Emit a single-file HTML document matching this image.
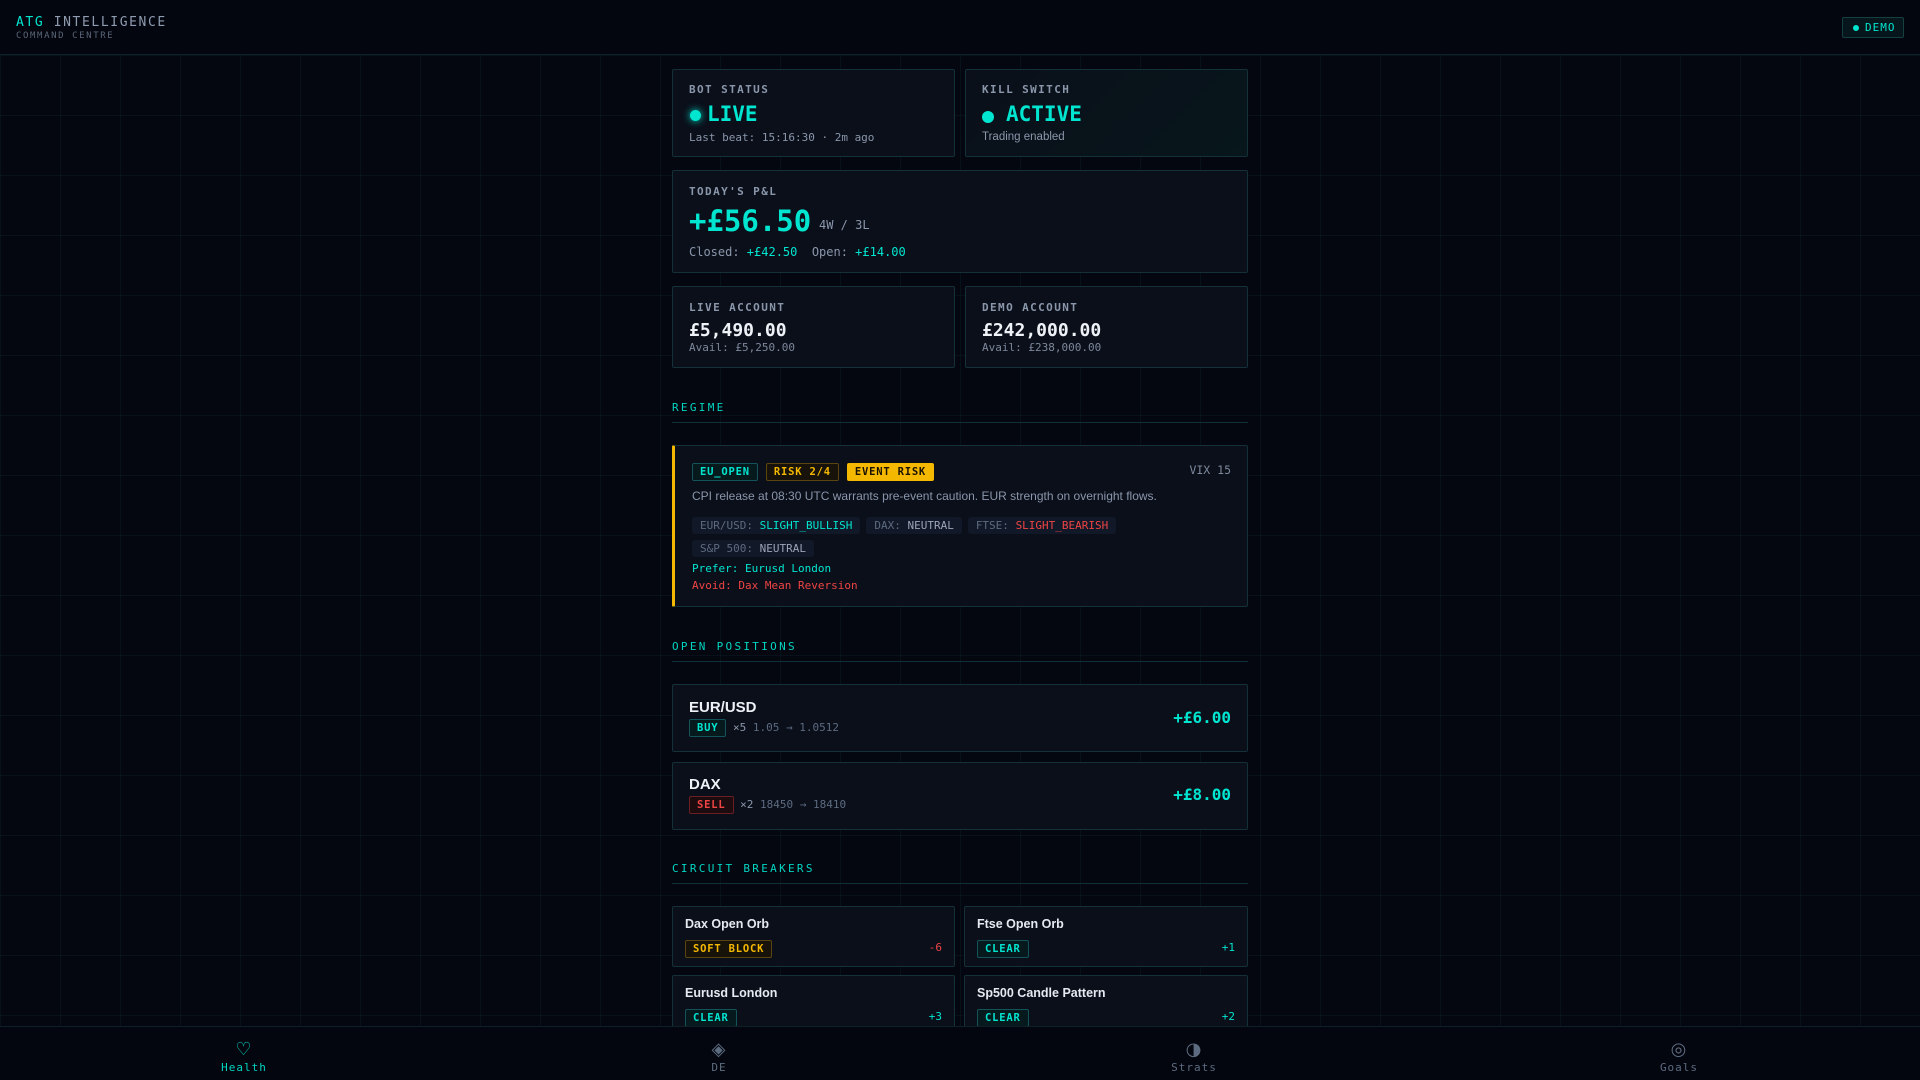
<!DOCTYPE html>
<html><head><meta charset="utf-8"><style>
*{box-sizing:border-box;margin:0;padding:0}
body{width:1920px;height:1080px;overflow:hidden;background:#04070f;font-family:"DejaVu Sans Mono","Liberation Mono",monospace;color:#c8d0dc;position:relative;
background-image:linear-gradient(rgba(20,60,70,.18) 1px,transparent 1px),linear-gradient(90deg,rgba(20,60,70,.18) 1px,transparent 1px);background-size:60px 60px;background-position:0 55px}
.a{position:absolute}
.hdr{left:0;top:0;width:1920px;height:55px;background:#03060e;border-bottom:1px solid #0f2128}
.card{position:absolute;background:#0a0f1a;border:1px solid #143038;border-radius:2px}
.lbl{font-size:11px;font-weight:bold;letter-spacing:1.4px;color:#8a96aa}
.acc{color:#00e5d0}
.sec{position:absolute;left:672px;width:576px;font-size:11px;letter-spacing:2.3px;color:#00d5c2;border-bottom:1px solid #12303a;padding-bottom:8px}
.sans{font-family:"Liberation Sans",Arial,sans-serif}
.tag{display:inline-block;font-size:10.5px;font-weight:bold;letter-spacing:0.8px;padding:2px 7px;border:1px solid;border-radius:2px}
.chip{display:inline-block;background:#111827;border-radius:3px;padding:2px 8px;font-size:11px;color:#5d6b80;margin-right:6px}
.nav{left:0;top:1026px;width:1920px;height:54px;background:#03060e;border-top:1px solid #0f2128}
.ni{position:absolute;top:13px;width:480px;text-align:center;color:#5d6b80;font-size:11px;letter-spacing:1px}
.ni .ic{font-size:18px;line-height:20px;display:block;margin-bottom:1px;font-family:"DejaVu Sans",sans-serif}
</style></head><body>
<div class="a hdr">
 <div class="a" style="left:16px;top:15px;font-size:13px;letter-spacing:1.6px;color:#8f9bb0"><span class="acc">ATG</span> INTELLIGENCE</div>
 <div class="a" style="left:16px;top:31px;font-size:9px;letter-spacing:1.6px;color:#5a6678">COMMAND CENTRE</div>
 <div class="a" style="left:1842px;top:17px;width:62px;height:21px;border:1px solid #14403f;background:#06161a;border-radius:2px;font-size:11px;color:#00e5d0;letter-spacing:1px;line-height:19px;padding-left:22px">DEMO<span class="a" style="left:10px;top:7px;width:6px;height:6px;border-radius:50%;background:#00e5d0"></span></div>
</div>

<div class="card" style="left:672px;top:69px;width:283px;height:88px">
 <div class="a lbl" style="left:16px;top:13px">BOT STATUS</div>
 <div class="a" style="left:17px;top:40px;width:11px;height:11px;border-radius:50%;background:#00e5d0;box-shadow:0 0 8px #00e5d0"></div>
 <div class="a acc" style="left:34px;top:32px;font-size:21px;font-weight:bold">LIVE</div>
 <div class="a" style="left:16px;top:61px;font-size:11px;color:#8a96aa">Last beat: 15:16:30 · 2m ago</div>
</div>
<div class="card" style="left:965px;top:69px;width:283px;height:88px;background:linear-gradient(135deg,#0a0f1a,#07171b)">
 <div class="a lbl" style="left:16px;top:13px">KILL SWITCH</div>
 <div class="a" style="left:16px;top:41px;width:12px;height:12px;border-radius:50%;background:#00e5d0"></div>
 <div class="a acc" style="left:40px;top:32px;font-size:21px;font-weight:bold">ACTIVE</div>
 <div class="a sans" style="left:16px;top:61px;font-size:11.5px;color:#8a96aa">Trading enabled</div>
</div>

<div class="card" style="left:672px;top:170px;width:576px;height:103px">
 <div class="a lbl" style="left:16px;top:14px">TODAY'S P&amp;L</div>
 <div class="a acc" style="left:16px;top:33px;font-size:29px;font-weight:bold">+£56.50</div>
 <div class="a" style="left:146px;top:47px;font-size:12px;color:#8a96aa">4W / 3L</div>
 <div class="a" style="left:16px;top:74px;font-size:12px;color:#8a96aa">Closed: <span class="acc">+£42.50</span>&nbsp;&nbsp;Open: <span class="acc">+£14.00</span></div>
</div>

<div class="card" style="left:672px;top:286px;width:283px;height:82px">
 <div class="a lbl" style="left:16px;top:14px">LIVE ACCOUNT</div>
 <div class="a" style="left:16px;top:33px;font-size:18px;font-weight:bold;color:#eef2f7">£5,490.00</div>
 <div class="a" style="left:16px;top:54px;font-size:11px;color:#7d889b">Avail: £5,250.00</div>
</div>
<div class="card" style="left:965px;top:286px;width:283px;height:82px">
 <div class="a lbl" style="left:16px;top:14px">DEMO ACCOUNT</div>
 <div class="a" style="left:16px;top:33px;font-size:18px;font-weight:bold;color:#eef2f7">£242,000.00</div>
 <div class="a" style="left:16px;top:54px;font-size:11px;color:#7d889b">Avail: £238,000.00</div>
</div>

<div class="sec" style="top:401px">REGIME</div>
<div class="card" style="left:672px;top:445px;width:576px;height:162px;border-left:3px solid #f5b800">
 <div class="a" style="left:17px;top:14px;white-space:nowrap">
  <span class="tag acc" style="border-color:#13545a;background:#06191d">EU_OPEN</span><span class="tag" style="color:#f5b800;border-color:#5a4510;background:#17130a;margin-left:8px">RISK 2/4</span><span class="tag" style="color:#1a1300;border-color:#f5b800;background:#f5b800;margin-left:8px">EVENT RISK</span>
 </div>
 <div class="a" style="right:16px;top:17px;font-size:11.5px;color:#7d889b">VIX 15</div>
 <div class="a sans" style="left:17px;top:43px;font-size:12px;color:#8a96aa">CPI release at 08:30 UTC warrants pre-event caution. EUR strength on overnight flows.</div>
 <div class="a" style="left:17px;top:68px;width:540px">
  <span class="chip">EUR/USD: <span class="acc">SLIGHT_BULLISH</span></span><span class="chip">DAX: <span style="color:#9aa5b8">NEUTRAL</span></span><span class="chip">FTSE: <span style="color:#ef4444">SLIGHT_BEARISH</span></span>
 </div>
 <div class="a" style="left:17px;top:91px"><span class="chip">S&amp;P 500: <span style="color:#9aa5b8">NEUTRAL</span></span></div>
 <div class="a acc" style="left:17px;top:116px;font-size:11px">Prefer: Eurusd London</div>
 <div class="a" style="left:17px;top:133px;font-size:11px;color:#ef4444">Avoid: Dax Mean Reversion</div>
</div>

<div class="sec" style="top:640px">OPEN POSITIONS</div>
<div class="card" style="left:672px;top:684px;width:576px;height:68px">
 <div class="a sans" style="left:16px;top:14px;font-size:15px;font-weight:bold;color:#eef2f7">EUR/USD</div>
 <div class="a" style="left:16px;top:34px;font-size:11px;color:#5d6b80"><span class="tag acc" style="border-color:#13545a;background:#06191d">BUY</span> <span style="color:#8a96aa">×5</span> 1.05 → 1.0512</div>
 <div class="a acc" style="right:16px;top:23px;font-size:16px;font-weight:bold">+£6.00</div>
</div>
<div class="card" style="left:672px;top:762px;width:576px;height:68px">
 <div class="a sans" style="left:16px;top:13px;font-size:15px;font-weight:bold;color:#eef2f7">DAX</div>
 <div class="a" style="left:16px;top:33px;font-size:11px;color:#5d6b80"><span class="tag" style="color:#ef4444;border-color:#6a1f22;background:#1c0c10">SELL</span> <span style="color:#8a96aa">×2</span> 18450 → 18410</div>
 <div class="a acc" style="right:16px;top:22px;font-size:16px;font-weight:bold">+£8.00</div>
</div>

<div class="sec" style="top:862px">CIRCUIT BREAKERS</div>
<div class="card" style="left:672px;top:906px;width:283px;height:61px">
 <div class="a sans" style="left:12px;top:10px;font-size:12.5px;font-weight:bold;color:#e6eaf0">Dax Open Orb</div>
 <div class="a" style="left:12px;top:30px"><span class="tag" style="color:#f5b800;border-color:#5a4510;background:#17130a">SOFT BLOCK</span></div>
 <div class="a" style="right:12px;top:34px;font-size:11px;color:#ef4444">-6</div>
</div>
<div class="card" style="left:964px;top:906px;width:284px;height:61px">
 <div class="a sans" style="left:12px;top:10px;font-size:12.5px;font-weight:bold;color:#e6eaf0">Ftse Open Orb</div>
 <div class="a" style="left:12px;top:30px"><span class="tag acc" style="border-color:#13545a;background:#06191d">CLEAR</span></div>
 <div class="a acc" style="right:12px;top:34px;font-size:11px">+1</div>
</div>
<div class="card" style="left:672px;top:975px;width:283px;height:61px">
 <div class="a sans" style="left:12px;top:10px;font-size:12.5px;font-weight:bold;color:#e6eaf0">Eurusd London</div>
 <div class="a" style="left:12px;top:30px"><span class="tag acc" style="border-color:#13545a;background:#06191d">CLEAR</span></div>
 <div class="a acc" style="right:12px;top:34px;font-size:11px">+3</div>
</div>
<div class="card" style="left:964px;top:975px;width:284px;height:61px">
 <div class="a sans" style="left:12px;top:10px;font-size:12.5px;font-weight:bold;color:#e6eaf0">Sp500 Candle Pattern</div>
 <div class="a" style="left:12px;top:30px"><span class="tag acc" style="border-color:#13545a;background:#06191d">CLEAR</span></div>
 <div class="a acc" style="right:12px;top:34px;font-size:11px">+2</div>
</div>

<div class="a nav">
 <div class="ni" style="left:4px;color:#00d5c2"><span class="ic">♡</span>Health</div>
 <div class="ni" style="left:479px"><span class="ic">◈</span>DE</div>
 <div class="ni" style="left:954px"><span class="ic">◑</span>Strats</div>
 <div class="ni" style="left:1439px"><span class="ic">◎</span>Goals</div>
</div>
</body></html>
